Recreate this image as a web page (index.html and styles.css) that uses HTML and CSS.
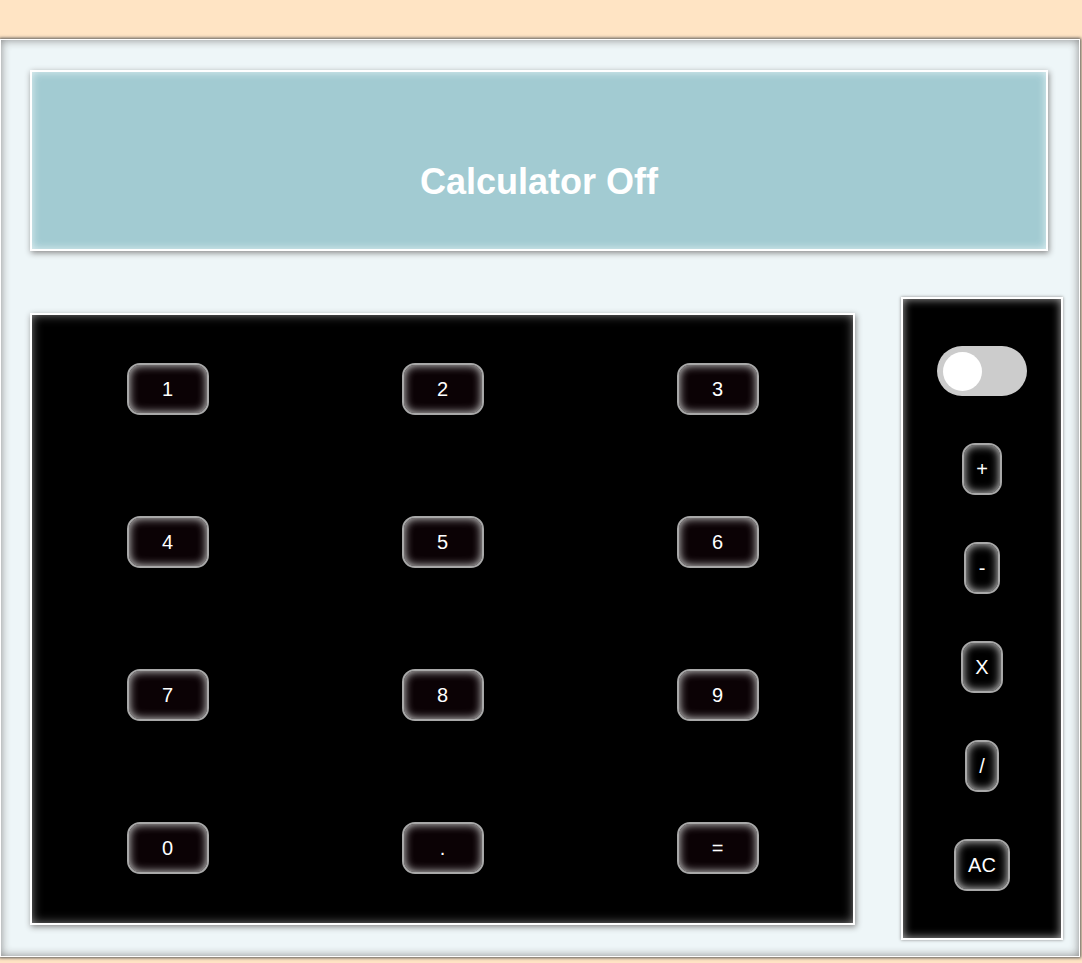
FILE: index.html
```html
<!DOCTYPE html>
<html>
<head>
<meta charset="utf-8">
<title>Calculator</title>
<link rel="stylesheet" href="styles.css">
</head>
<body>
<div class="calc">
  <div class="display">Calculator Off</div>
  <div class="body-row">
    <div class="keypad">
      <button class="key">1</button>
      <button class="key">2</button>
      <button class="key">3</button>
      <button class="key">4</button>
      <button class="key">5</button>
      <button class="key">6</button>
      <button class="key">7</button>
      <button class="key">8</button>
      <button class="key">9</button>
      <button class="key">0</button>
      <button class="key">.</button>
      <button class="key">=</button>
    </div>
    <div class="ops">
      <div class="toggle"><span class="knob"></span></div>
      <button class="op">+</button>
      <button class="op">-</button>
      <button class="op">X</button>
      <button class="op">/</button>
      <button class="op">AC</button>
    </div>
  </div>
</div>
</body>
</html>
```
FILE: styles.css
```css
html, body {
  margin: 0;
  padding: 0;
}
body {
  background: #ffe4c4;
  font-family: "Liberation Sans", Arial, sans-serif;
  width: 1082px;
  height: 963px;
  overflow: hidden;
}
.calc {
  box-sizing: border-box;
  margin-top: 39px;
  width: 1080px;
  height: 918px;
  background: #eef6f8;
  border: 1px solid #ffffff;
  box-shadow: 0 0 3px 1px #555, inset 0 0 10px #888;
  padding: 30px 0 0 29px;
}
.display {
  box-sizing: border-box;
  width: 1018px;
  height: 181px;
  background: #a2cbd2;
  border: 2px solid #ffffff;
  box-shadow: 1px 2px 6px #888, inset 0 0 8px #e4f2f4;
  color: #ffffff;
  font-weight: bold;
  font-size: 36px;
  line-height: 41px;
  text-align: center;
  padding-top: 89px;
}
.body-row {
  display: flex;
  align-items: center;
  gap: 46px;
  margin-top: 46px;
}
.keypad {
  width: 825px;
  height: 612px;
  background: #000;
  box-shadow: 1px 2px 6px #888, inset 0 0 0 2px #ffffff, inset 0 0 12px #b0b0b0;
  display: grid;
  grid-template-columns: repeat(3, 275px);
  grid-template-rows: repeat(4, 153px);
  place-items: center;
}
.key, .op {
  font-family: "Liberation Sans", Arial, sans-serif;
  font-size: 20px;
  color: #ffffff;
  border: 2px solid #a8a8a8;
  border-radius: 13px;
  box-shadow: inset 0 0 10px #e0e0e0;
  height: 52px;
  box-sizing: border-box;
  padding: 0;
  cursor: pointer;
}
.key {
  width: 82px;
  background: #0b0205;
}
.op {
  background: #000;
  padding: 0 12.5px;
}
.ops {
  box-sizing: border-box;
  width: 162px;
  height: 643px;
  background: #000;
  border: 2px solid #ffffff;
  box-shadow: 0 0 3px #888, inset 0 0 10px #aaa;
  display: flex;
  flex-direction: column;
  align-items: center;
  justify-content: space-evenly;
}
.toggle {
  box-sizing: border-box;
  width: 90px;
  height: 50px;
  border-radius: 25px;
  background: #cccccc;
  padding: 6px;
  display: flex;
  align-items: center;
}
.knob {
  width: 39px;
  height: 39px;
  border-radius: 50%;
  background: #ffffff;
}
```
